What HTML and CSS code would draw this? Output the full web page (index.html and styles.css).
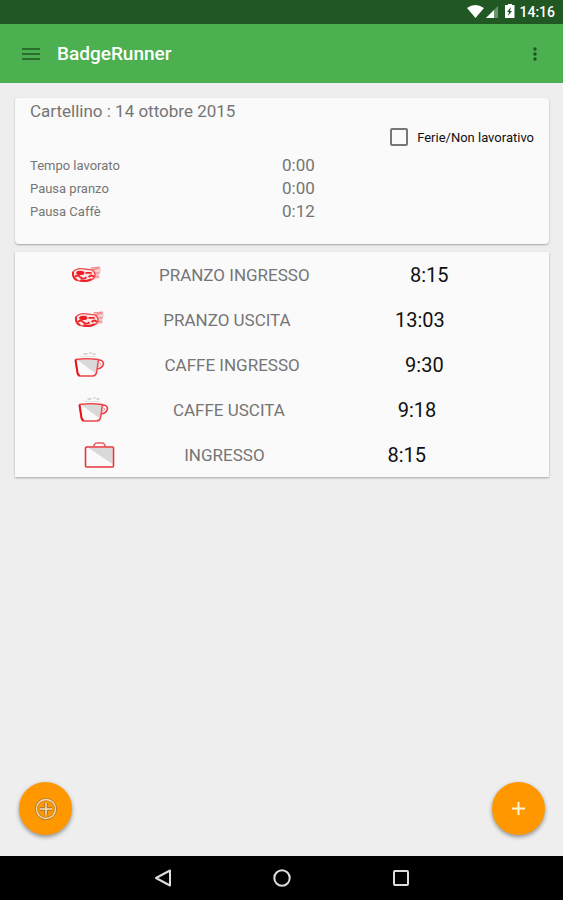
FILE: index.html
```html
<!DOCTYPE html>
<html lang="it">
<head>
<meta charset="utf-8">
<meta name="viewport" content="width=device-width, initial-scale=1">
<title>BadgeRunner</title>
<link rel="stylesheet" href="styles.css">
</head>
<body>
<svg class="defs" width="0" height="0" aria-hidden="true">
  <symbol id="food" viewBox="0 0 30 20">
    <path d="M19 3 28 1 29 6 27 9 28 13 21 15z" fill="#f6c9cb"/>
    <path d="M19 3h8M21 5l7-2M22 8h6M23 11l4 1" stroke="#ec8388" fill="none"/>
    <path d="M2 7Q5 3 12 4L20 5Q24 7 23 12 19 17 9 16 1 15 2 7z" fill="#fce6e6" stroke="#f0474b" stroke-width="1.300"/>
    <ellipse cx="9" cy="8" rx="4" ry="2" fill="#ee1d23"/>
    <path d="M2 7Q1 13 6 15M14 8H20M4 12Q6 9 9 12T15 12M17 12Q20 9 22 12M9 15Q14 17 20 14" stroke="#ee2228" stroke-width="1.800" fill="none"/>
  </symbol>
  <symbol id="cup" viewBox="0 0 30 26">
    <path d="M9 2h4M15 1h2M18 2h3" stroke="#d6d6d6" stroke-width="2" fill="none"/>
    <path d="M6 4.500h15" stroke="#e2e2e2"/>
    <path d="M3 8H24L22 22z" fill="#d9d9d9"/>
    <path d="M1 7.500Q12 6 24 7.500L22 21Q21 24 18 24H6Q3 24 3 21z" fill="none" stroke="#ec4449" stroke-width="1.500" stroke-linejoin="round"/>
    <path d="M1 8 3 21 5 24" fill="none" stroke="#e8161c" stroke-width="2"/>
    <path d="M24 8Q29 8 29 12 28 16 23 17" fill="none" stroke="#e9444a" stroke-width="1.600"/>
    <path d="M24 10.500Q27 11 26 13L23 15" fill="none" stroke="#f29a9d"/>
  </symbol>
  <symbol id="case" viewBox="0 0 30 26">
    <path d="M4 6H28V22z" fill="#d9d9d9"/>
    <rect x="1" y="5" width="28" height="20" rx="1" fill="none" stroke="#e9343a" stroke-width="1.600"/>
    <path d="M9 5Q10 1 12 1H18Q20 1 21 5" fill="none" stroke="#ec5c61" stroke-width="1.500"/>
  </symbol>
</svg>

<div class="statusbar">
  <svg width="50" height="16" viewBox="0 0 50 16" aria-hidden="true">
    <path d="M2 4Q10-2 19 4L10.500 14z" fill="#fff"/>
    <path d="M33 2V14H21z" fill="#6b936d"/>
    <path d="M29 6V14H21z" fill="#fff"/>
    <path d="M43 0h4v1h2.500V14H40V1h3z" fill="#fff"/>
    <path d="M46 3l-4 5h2l-1 4 4-5h-2z" fill="#205723"/>
  </svg>
  <span>14:16</span>
</div>

<header class="appbar">
  <button class="icon-button" aria-label="Menu">
    <svg width="18" height="12" viewBox="0 0 18 12"><path d="M0 1h18M0 6h18M0 11h18" stroke="#2a6e2d" stroke-width="2"/></svg>
  </button>
  <h1>BadgeRunner</h1>
  <button class="icon-button" aria-label="Altre opzioni">
    <svg width="4" height="14" viewBox="0 0 4 14" fill="#1d5420"><circle cx="2" cy="2" r="1.700"/><circle cx="2" cy="7" r="1.700"/><circle cx="2" cy="12" r="1.700"/></svg>
  </button>
</header>

<main>
  <section class="card summary">
    <h2>Cartellino : 14 ottobre 2015</h2>
    <label class="holiday"><input type="checkbox">Ferie/Non lavorativo</label>
    <dl>
      <dt>Tempo lavorato</dt><dd>0:00</dd>
      <dt>Pausa pranzo</dt><dd>0:00</dd>
      <dt>Pausa Caffè</dt><dd>0:12</dd>
    </dl>
  </section>

  <ul class="card entries">
    <li><svg class="entry-icon" aria-hidden="true"><use href="#food"/></svg><span class="kind">PRANZO INGRESSO</span><time>8:15</time></li>
    <li><svg class="entry-icon" aria-hidden="true"><use href="#food"/></svg><span class="kind">PRANZO USCITA</span><time>13:03</time></li>
    <li><svg class="entry-icon" aria-hidden="true"><use href="#cup"/></svg><span class="kind">CAFFE INGRESSO</span><time>9:30</time></li>
    <li><svg class="entry-icon" aria-hidden="true"><use href="#cup"/></svg><span class="kind">CAFFE USCITA</span><time>9:18</time></li>
    <li><svg class="entry-icon" aria-hidden="true"><use href="#case"/></svg><span class="kind">INGRESSO</span><time>8:15</time></li>
  </ul>
</main>

<div class="actions">
  <button class="fab" aria-label="Timbra">
    <svg width="24" height="24" viewBox="0 0 24 24" fill="none">
      <circle cx="12" cy="12" r="9.500" stroke="#b97a2a" stroke-width="3"/>
      <circle cx="12" cy="12" r="9.500" stroke="#f3dfb4" stroke-width="1.300"/>
      <path d="M12 6v12M6 12h12" stroke="#b97a2a" stroke-width="4"/>
      <path d="M12 6v12M6 12h12" stroke="#f3dfb4" stroke-width="1.500"/>
    </svg>
  </button>
  <button class="fab" aria-label="Aggiungi">
    <svg width="13" height="13" viewBox="0 0 13 13"><path d="M6.500 0v13M0 6.500h13" stroke="#fff3d8" stroke-width="2"/></svg>
  </button>
</div>

<nav class="navbar">
  <button aria-label="Indietro"><svg width="18" height="18" viewBox="0 0 18 18"><path d="M16 1.500V16.500L2 9z"/></svg></button>
  <button aria-label="Home"><svg width="18" height="18" viewBox="0 0 18 18"><circle cx="9" cy="9" r="7.700"/></svg></button>
  <button aria-label="Recenti"><svg width="18" height="18" viewBox="0 0 18 18"><rect x="2" y="2" width="14" height="14" rx="1"/></svg></button>
</nav>
</body>
</html>
```
FILE: styles.css
```css
* {
  box-sizing: border-box;
}

body {
  margin: 0;
  min-height: 100vh;
  display: flex;
  flex-direction: column;
  background: #eee;
  color: #757575;
  font-family: Roboto, sans-serif;
}

button {
  display: flex;
  align-items: center;
  justify-content: center;
  padding: 0;
  border: 0;
  background: none;
}

.defs {
  position: absolute;
}

.statusbar {
  display: flex;
  align-items: center;
  justify-content: flex-end;
  gap: 4px;
  height: 24px;
  padding-right: 8px;
  background: #205723;
  color: #fff;
  font-size: 14px;
  font-weight: 500;
}

.appbar {
  display: flex;
  align-items: center;
  height: 59px;
  padding: 0 16px;
  background: #4caf50;
}

.icon-button {
  width: 24px;
  height: 32px;
}

.appbar .icon-button:first-child {
  width: 30px;
}

.appbar h1 {
  flex: 1;
  margin: 0 0 0 11px;
  color: #fff;
  font-size: 19px;
  font-weight: 500;
}

main {
  flex: 1;
  display: flex;
  flex-direction: column;
  gap: 8px;
  padding: 15px 14px 15px 15px;
}

.card {
  margin: 0;
  background: #fafafa;
  box-shadow: 0 1px 2px rgba(0, 0, 0, 0.3);
}

.summary {
  padding: 2px 15px 21px;
  border-radius: 4px;
}

.summary h2 {
  margin: 0;
  font-size: 17px;
  font-weight: 400;
  line-height: 22px;
}

.holiday {
  display: flex;
  align-items: center;
  justify-content: flex-end;
  gap: 9px;
  height: 30px;
  color: #111;
  font-size: 13px;
}

.holiday input {
  appearance: none;
  width: 18px;
  height: 18px;
  margin: 0;
  border: 2px solid #777;
  border-radius: 2px;
}

.summary dl {
  display: grid;
  grid-template-columns: 1fr 1fr;
  margin: 0;
  padding-top: 2px;
  line-height: 23px;
}

.summary dt {
  font-size: 13px;
}

.summary dd {
  margin: 0;
  font-size: 17px;
}

.entries {
  padding: 0;
  list-style: none;
}

.entries li {
  display: grid;
  grid-template-columns: 9fr auto 9fr auto 16fr auto 16fr;
  align-items: center;
  height: 45px;
}

.entry-icon {
  grid-column: 2;
  width: 31px;
  height: 26px;
}

.kind {
  grid-column: 4;
  font-size: 17px;
}

.entries time {
  grid-column: 6;
  color: #111;
  font-size: 20px;
}

.actions {
  display: flex;
  justify-content: space-between;
  padding: 0 18px 21px 19px;
}

.fab {
  width: 53px;
  height: 53px;
  border-radius: 50%;
  background: #ff9800;
  box-shadow: 0 2px 4px rgba(0, 0, 0, 0.4);
}

.navbar {
  display: flex;
  justify-content: center;
  gap: 72px;
  height: 44px;
  background: #000;
}

.navbar button {
  width: 47px;
}

.navbar svg {
  fill: none;
  stroke: #ddd;
  stroke-width: 2;
  stroke-linejoin: round;
}
```
